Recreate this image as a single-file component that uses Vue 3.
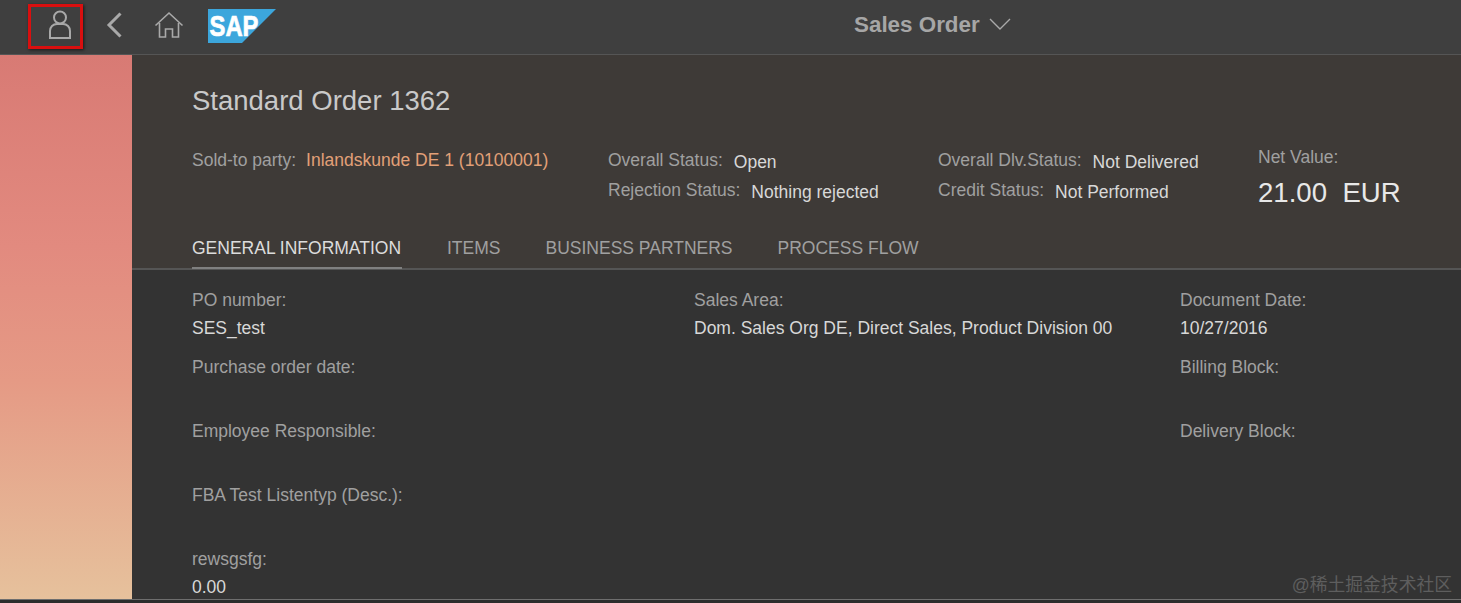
<script setup>
const tabs = ['GENERAL INFORMATION', 'ITEMS', 'BUSINESS PARTNERS', 'PROCESS FLOW']
const rows = [
  [{ l: 'PO number:', v: 'SES_test' }, { l: 'Sales Area:', v: 'Dom. Sales Org DE, Direct Sales, Product Division 00' }, { l: 'Document Date:', v: '10/27/2016' }],
  [{ l: 'Purchase order date:' }, {}, { l: 'Billing Block:' }],
  [{ l: 'Employee Responsible:' }, {}, { l: 'Delivery Block:' }],
  [{ l: 'FBA Test Listentyp (Desc.):' }, {}, {}],
  [{ l: 'rewsgsfg:', v: '0.00' }, {}, {}],
]
</script>

<template>
  <div class="page">
    <header class="bar">
      <div class="left">
        <div class="me">
          <svg width="24" height="30" viewBox="0 0 24 30" fill="none" stroke="#a9a9a9" stroke-width="2">
            <circle cx="12" cy="7.5" r="6" />
            <path d="M2 28 V21 C2 17 5 14 9 14 H15 C19 14 22 17 22 21 V28 Z" />
          </svg>
        </div>
        <svg class="back" width="18" height="26" viewBox="0 0 18 26" fill="none" stroke="#a9a9a9" stroke-width="3">
          <path d="M15.5 1.5 L4 13 L15.5 24.5" />
        </svg>
        <svg class="home" width="30" height="28" viewBox="0 0 30 28" fill="none" stroke="#a9a9a9" stroke-width="1.6">
          <path d="M1.5 14.5 L15 2 L28.5 14.5" />
          <path d="M5.5 12 V26 H11.5 V18 H18.5 V26 H24.5 V12" />
        </svg>
        <svg class="logo" width="68" height="34" viewBox="0 0 68 34">
          <path d="M0 0 H68 L34 34 H0 Z" fill="#3ca6dc" />
          <text x="1.5" y="27" class="sap" textLength="49" lengthAdjust="spacingAndGlyphs">SAP</text>
        </svg>
      </div>
      <div class="title">
        <span>Sales Order</span>
        <svg width="22" height="12" viewBox="0 0 22 12" fill="none" stroke="#a9a9a9" stroke-width="1.4">
          <path d="M1 1 L11 11 L21 1" />
        </svg>
      </div>
    </header>

    <div class="body">
      <aside class="side"></aside>
      <main class="main">
        <section class="head">
          <h1>Standard Order 1362</h1>
          <div class="stats">
            <div class="col c1">
              <div class="pair"><span class="lab">Sold-to party:</span><span class="link">Inlandskunde DE 1 (10100001)</span></div>
            </div>
            <div class="col c2">
              <div class="pair"><span class="lab">Overall Status:</span><span class="val">Open</span></div>
              <div class="pair"><span class="lab">Rejection Status:</span><span class="val">Nothing rejected</span></div>
            </div>
            <div class="col c3">
              <div class="pair"><span class="lab">Overall Dlv.Status:</span><span class="val">Not Delivered</span></div>
              <div class="pair"><span class="lab">Credit Status:</span><span class="val">Not Performed</span></div>
            </div>
            <div class="net">
              <div class="lab">Net Value:</div>
              <div class="amount">21.00&nbsp; EUR</div>
            </div>
          </div>
          <nav class="tabs">
            <span v-for="(t, i) in tabs" :key="t" class="tab" :class="{ on: i === 0 }">{{ t }}</span>
          </nav>
        </section>
        <section class="details">
          <div v-for="(r, i) in rows" :key="i" class="row">
            <div v-for="(c, j) in r" :key="j" class="cell">
              <div v-if="c.l" class="lab">{{ c.l }}</div>
              <div v-if="c.v" class="val">{{ c.v }}</div>
            </div>
          </div>
        </section>
        <div class="mark">@稀土掘金技术社区</div>
      </main>
    </div>
    <div class="foot"></div>
  </div>
</template>

<style>
html, body { margin: 0; background: #2f2f2f; }
</style>

<style scoped>
.page {
  width: 1461px;
  height: 603px;
  overflow: hidden;
  display: flex;
  flex-direction: column;
  font-family: "Liberation Sans", Arial, sans-serif;
  font-size: 17.5px;
  color: #a6a6a6;
  background: #333;
}
.bar {
  height: 54px;
  flex: none;
  position: relative;
  display: flex;
  align-items: center;
  background: #3f3f3f;
  border-bottom: 1px solid #555;
}
.left {
  display: flex;
  align-items: center;
  padding-left: 28px;
}
.me {
  width: 49px;
  height: 39px;
  border: 3px solid #d90f0f;
  box-shadow: 1px 1px 3px rgba(0, 0, 0, 0.6);
  display: flex;
  align-items: center;
  justify-content: center;
  position: relative;
  top: -1px;
}
.me svg { position: relative; left: 4px; top: -1px; }
.back { margin: 0 0 5px 22px; }
.home { margin: 0 0 5px 31px; }
.logo { margin: 0 0 2px 24px; }
.sap {
  font-family: "Liberation Sans", Arial, sans-serif;
  font-weight: 700;
  font-size: 30px;
  fill: #fff;
  stroke: #fff;
  stroke-width: 0.7px;
}
.title {
  position: absolute;
  left: 854px;
  top: 12px;
  display: flex;
  align-items: center;
  gap: 10px;
  font-size: 22.4px;
  font-weight: 700;
  line-height: 26px;
  color: #a6a6a6;
}
.title svg { margin-bottom: 2px; margin-left: -1px; }
.body {
  flex: 1;
  min-height: 0;
  display: flex;
}
.side {
  width: 132px;
  flex: none;
  background: linear-gradient(180deg, #d87a74 0%, #e28a7f 35%, #e59a85 60%, #e6c19c 100%);
}
.main {
  flex: 1;
  min-width: 0;
  position: relative;
  background: #333;
}
.head {
  height: 215px;
  box-sizing: border-box;
  padding: 29px 0 0 60px;
  background: #3e3a37;
  border-bottom: 2px solid #555;
}
h1 {
  margin: 0;
  font-size: 27.5px;
  font-weight: 400;
  line-height: 34px;
  color: #c9c9c9;
}
.stats {
  display: flex;
  margin-top: 28px;
  height: 70px;
}
.col { display: flex; flex-direction: column; gap: 6px; padding-top: 3px; }
.c1 { width: 416px; }
.c2 { width: 330px; }
.c3 { width: 320px; }
.pair {
  display: flex;
  align-items: flex-start;
  gap: 11px;
  line-height: 22px;
}
.lab { color: #a0a0a0; line-height: 22px; }
.val { color: #d8d8d8; line-height: 22px; }
.pair .val { margin-top: 2px; }
.link { color: #e2a078; }
.c1 .pair { gap: 10px; }
.amount {
  margin-top: 8px;
  font-size: 27.6px;
  line-height: 34px;
  color: #e8e8e8;
}
.tabs {
  display: flex;
  gap: 45px;
  margin-top: 21px;
}
.tab {
  font-size: 17.5px;
  line-height: 22px;
  height: 30px;
  color: #a0a0a0;
  white-space: nowrap;
}
.tab.on {
  color: #dcdcdc;
  min-width: 210px;
  border-bottom: 2px solid #808080;
}
.details {
  padding: 19px 0 0 60px;
}
.row {
  display: grid;
  grid-template-columns: 502px 486px 1fr;
  min-height: 64px;
}
.row:first-child { min-height: 67px; }
.row:first-child .val, .row:last-child .val { margin-top: 6px; }
.mark {
  position: absolute;
  right: 9px;
  bottom: 2px;
  font-family: "Liberation Sans", "Noto Sans CJK SC", sans-serif;
  font-size: 17.8px;
  line-height: 24px;
  color: #5e5e5e;
}
.foot {
  flex: none;
  height: 4px;
  background: #2c2c2c;
  border-top: 1px solid #6e6e6e;
  box-sizing: border-box;
}
</style>
